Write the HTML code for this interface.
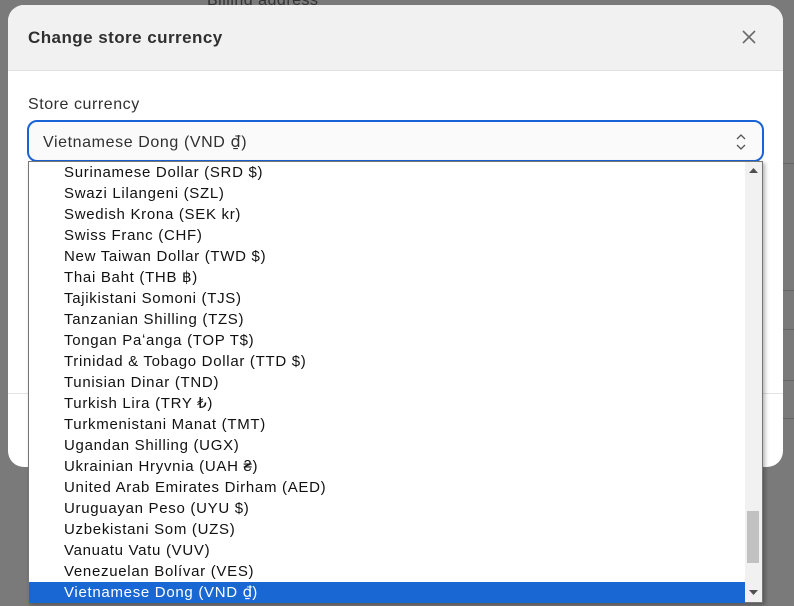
<!DOCTYPE html>
<html><head><style>
body{margin:0;width:794px;height:606px;background:#7a7a7a;position:relative;overflow:hidden;font-family:"Liberation Sans","DejaVu Sans",sans-serif;}
.bgtext{position:absolute;left:207px;top:-8px;color:#333;font-size:16px;letter-spacing:.5px;}
.bgline{position:absolute;background:#666;height:1px;left:783px;width:11px;}
.modal{position:absolute;left:8px;top:5px;width:775px;height:462px;background:#fff;border-radius:16px;overflow:hidden;}
.hdr{height:65px;background:#f1f1f1;border-bottom:1px solid #e1e1e1;}
.hdr h1{margin:0;position:absolute;left:20px;top:23px;font-size:17px;font-weight:bold;color:#303030;letter-spacing:.45px;}
.x{position:absolute;left:733px;top:24px;}
.lbl{position:absolute;left:20px;top:91px;font-size:16px;color:#303030;letter-spacing:.55px;}
.sel{position:absolute;left:19px;top:115px;width:737px;height:42px;box-sizing:border-box;border:2px solid #1a63d6;border-radius:10px;background:#fafafa;}
.sel span{position:absolute;left:14px;top:10px;font-size:16px;color:#303030;letter-spacing:.6px;}
.d{font-family:"DejaVu Sans",sans-serif;letter-spacing:0;}
.foot{position:absolute;left:0;top:388px;width:775px;height:1px;background:#e3e3e3;}
.list{position:absolute;left:28px;top:161px;width:735px;height:442px;background:#fff;border:1px solid #767676;box-sizing:border-box;box-shadow:2px 2px 4px rgba(0,0,0,.3);}
.row{height:21px;line-height:21px;padding-left:35px;font-size:15px;color:#111;white-space:nowrap;width:716px;box-sizing:border-box;letter-spacing:.7px;}
.row.s{background:#1967d2;color:#fff;}
.sb{position:absolute;right:0;top:0;width:17px;height:440px;background:#f1f1f1;}
.thumb{position:absolute;left:2px;top:349px;width:12px;height:52px;background:#c1c1c1;}
</style></head><body>
<div class="bgtext">Billing address</div>
<div class="bgline" style="top:163px"></div>
<div class="bgline" style="top:290px"></div>
<div class="bgline" style="top:329px"></div>
<div class="bgline" style="top:380px"></div>
<div class="bgline" style="top:418px"></div>
<div class="modal">
<div class="hdr"><h1>Change store currency</h1>
<svg class="x" width="16" height="16" viewBox="0 0 16 16"><path d="M2 2L14 14M14 2L2 14" stroke="#6b6b6b" stroke-width="1.6"/></svg></div>
<div class="lbl">Store currency</div>
<div class="sel"><span>Vietnamese Dong (VND <span class="d" style="position:static">₫</span>)</span>
<svg style="position:absolute;left:707px;top:12px" width="10" height="16" viewBox="0 0 10 16"><path d="M1 5L5 1L9 5M1 11L5 15L9 11" fill="none" stroke="#555" stroke-width="1.3"/></svg></div>
<div class="foot"></div>
</div>
<div class="list">
<div class="row">Surinamese Dollar (SRD $)</div>
<div class="row">Swazi Lilangeni (SZL)</div>
<div class="row">Swedish Krona (SEK kr)</div>
<div class="row">Swiss Franc (CHF)</div>
<div class="row">New Taiwan Dollar (TWD $)</div>
<div class="row">Thai Baht (THB ฿)</div>
<div class="row">Tajikistani Somoni (TJS)</div>
<div class="row">Tanzanian Shilling (TZS)</div>
<div class="row">Tongan Paʻanga (TOP T$)</div>
<div class="row">Trinidad &amp; Tobago Dollar (TTD $)</div>
<div class="row">Tunisian Dinar (TND)</div>
<div class="row">Turkish Lira (TRY ₺)</div>
<div class="row">Turkmenistani Manat (TMT)</div>
<div class="row">Ugandan Shilling (UGX)</div>
<div class="row">Ukrainian Hryvnia (UAH ₴)</div>
<div class="row">United Arab Emirates Dirham (AED)</div>
<div class="row">Uruguayan Peso (UYU $)</div>
<div class="row">Uzbekistani Som (UZS)</div>
<div class="row">Vanuatu Vatu (VUV)</div>
<div class="row">Venezuelan Bolívar (VES)</div>
<div class="row s">Vietnamese Dong (VND <span class="d">₫</span>)</div>
<div class="sb"><svg style="position:absolute;left:4px;top:6px" width="9" height="6"><path d="M0 5L4.5 0L9 5Z" fill="#505050"/></svg><div class="thumb"></div><svg style="position:absolute;left:4px;top:428px" width="9" height="6"><path d="M0 0L4.5 5L9 0Z" fill="#505050"/></svg></div>
</div>
</body></html>
